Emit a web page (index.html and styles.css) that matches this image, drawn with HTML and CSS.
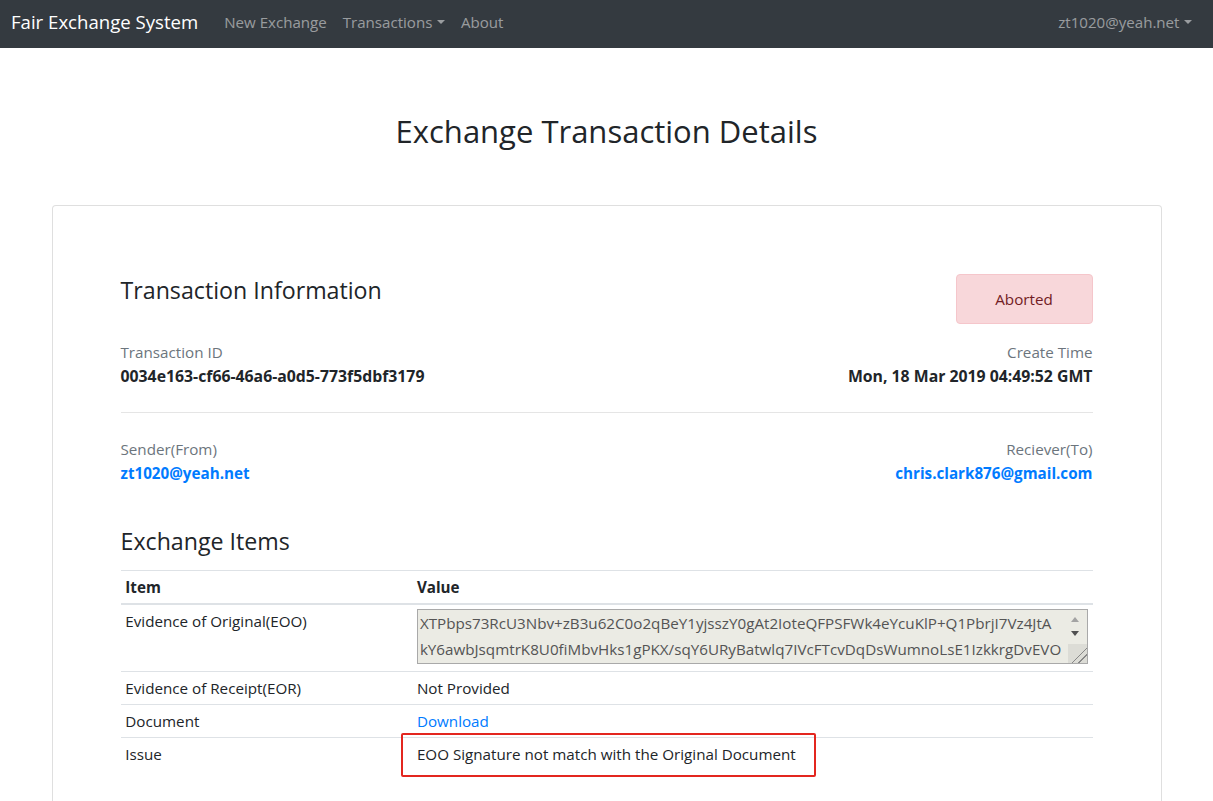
FILE: index.html
```html
<!DOCTYPE html>
<html lang="en">
<head>
<meta charset="utf-8">
<title>Fair Exchange System</title>
<link rel="stylesheet" href="styles.css">
</head>
<body>
<nav class="navbar">
  <div class="nav-left">
    <a class="brand" href="#">Fair Exchange System</a>
    <ul class="nav-links">
      <li><a class="nav-link" href="#">New Exchange</a></li>
      <li><a class="nav-link dropdown" href="#">Transactions</a></li>
      <li><a class="nav-link" href="#">About</a></li>
    </ul>
  </div>
  <a class="nav-link nav-user dropdown" href="#">zt1020@yeah.net</a>
</nav>

<main class="container">
  <h2 class="page-title">Exchange Transaction Details</h2>
  <div class="card">
    <div class="card-body">
      <div class="row-between top-row">
        <h4 class="section-title info-title">Transaction Information</h4>
        <div class="status-alert">Aborted</div>
      </div>

      <div class="row-between info-row">
        <div class="field">
          <div class="label">Transaction ID</div>
          <div class="value">0034e163-cf66-46a6-a0d5-773f5dbf3179</div>
        </div>
        <div class="field right">
          <div class="label">Create Time</div>
          <div class="value">Mon, 18 Mar 2019 04:49:52 GMT</div>
        </div>
      </div>

      <hr class="divider">

      <div class="row-between info-row">
        <div class="field">
          <div class="label">Sender(From)</div>
          <a class="value link" href="#">zt1020@yeah.net</a>
        </div>
        <div class="field right">
          <div class="label">Reciever(To)</div>
          <a class="value link" href="#">chris.clark876@gmail.com</a>
        </div>
      </div>

      <h4 class="section-title items-title">Exchange Items</h4>

      <table class="items-table">
        <thead>
          <tr><th class="col-item">Item</th><th>Value</th></tr>
        </thead>
        <tbody>
          <tr>
            <td>Evidence of Original(EOO)</td>
            <td>
              <div class="evidence-box">
                <textarea class="evidence" readonly rows="2">XTPbps73RcU3Nbv+zB3u62C0o2qBeY1yjsszY0gAt2IoteQFPSFWk4eYcuKlP+Q1PbrjI7Vz4JtA
kY6awbJsqmtrK8U0fiMbvHks1gPKX/sqY6URyBatwlq7IVcFTcvDqDsWumnoLsE1IzkkrgDvEVO
Vq3n8xTRa0PbXc2L9mWk4Ye5Gs1bN7uQjA0r+Hd6ZtC3oUf8KyIe2Wl9MpVs4Dg==</textarea>
                <span class="sb-up"></span>
                <span class="sb-down"></span>
                <span class="sb-grip"></span>
              </div>
            </td>
          </tr>
          <tr>
            <td>Evidence of Receipt(EOR)</td>
            <td>Not Provided</td>
          </tr>
          <tr>
            <td>Document</td>
            <td><a class="link-plain" href="#">Download</a></td>
          </tr>
          <tr>
            <td>Issue</td>
            <td><span class="issue-mark">EOO Signature not match with the Original Document</span></td>
          </tr>
        </tbody>
      </table>
    </div>
  </div>
</main>
</body>
</html>
```

FILE: styles.css
```css
html { overflow: hidden; }
* { box-sizing: border-box; }
body {
  margin: 0;
  font-family: "Open Sans", "Noto Sans", sans-serif;
  font-size: 15.2px;
  line-height: 24px;
  color: #212529;
  background: #fff;
}
a { text-decoration: none; }

.navbar {
  height: 48px;
  background: #343a40;
  display: flex;
  align-items: center;
  justify-content: space-between;
  padding: 0 13px 4px 11px;
}
.nav-left { display: flex; align-items: center; }
.brand {
  color: #fff;
  font-size: 18.6px;
  line-height: 30px;
  margin-right: 18px;
}
.nav-links { display: flex; list-style: none; margin: 0; padding: 0; }
.nav-link {
  color: rgba(255,255,255,.5);
  font-size: 15.1px;
  padding: 0 8px;
  line-height: 24px;
  display: block;
}
.dropdown::after {
  content: "";
  display: inline-block;
  margin-left: .3em;
  vertical-align: .255em;
  border-top: .32em solid;
  border-right: .32em solid transparent;
  border-left: .32em solid transparent;
}

.container {
  max-width: 1140px;
  margin: 0 auto;
  padding: 0 15px;
}
.page-title {
  text-align: center;
  font-size: 31px;
  font-weight: 500;
  line-height: 1.2;
  margin: 65px 0 55px;
}
.card {
  border: 1px solid rgba(0,0,0,.125);
  border-radius: 4px;
  background: #fff;
}
.card-body { padding: 68px; }

.row-between { display: flex; justify-content: space-between; align-items: flex-start; }
.section-title {
  font-size: 23.2px;
  font-weight: 500;
  line-height: 1.2;
  margin: 0;
}
.info-title { padding-top: 3px; }
.status-alert {
  background: #f8d7da;
  border: 1px solid #f5c6cb;
  color: #721c24;
  border-radius: 4px;
  width: 137px;
  height: 50px;
  display: flex;
  align-items: center;
  justify-content: center;
}
.top-row { margin-bottom: 16px; }
.field { display: flex; flex-direction: column; }
.field.right { align-items: flex-end; text-align: right; }
.label { color: #6c757d; }
.value { font-weight: 700; font-size: 15.8px; }
.link { color: #007bff; font-size: 15.2px; }
.link-plain { color: #007bff; }
.divider {
  border: 0;
  border-top: 1px solid rgba(0,0,0,.1);
  margin: 24px 0;
}
.items-title { margin: 43px 0 14px; }

.items-table {
  width: 100%;
  border-collapse: collapse;
}
.items-table th, .items-table td {
  text-align: left;
  vertical-align: top;
  padding: 4px 4.8px;
  border-top: 1px solid #dee2e6;
}
.items-table thead th {
  border-bottom: 2px solid #dee2e6;
  font-weight: 700;
}
.col-item { width: 30%; }

.evidence-box { position: relative; margin-bottom: 3px; }
.evidence {
  display: block;
  width: 100%;
  height: 55px;
  margin: 0;
  padding: 0 22px 1px 2px;
  border: 1px solid #a9a9a9;
  background: #ebebe4;
  color: #545454;
  font-family: inherit;
  font-size: 15.2px;
  line-height: 26px;
  resize: none;
  overflow: hidden;
  white-space: pre;
}
.sb-up, .sb-down {
  position: absolute;
  right: 9px;
  width: 0; height: 0;
  border-left: 4px solid transparent;
  border-right: 4px solid transparent;
}
.sb-up { top: 8px; border-bottom: 5px solid #a3a3a3; }
.sb-down { top: 22px; border-top: 5px solid #505050; }
.sb-grip {
  position: absolute;
  right: 1px; bottom: 1px;
  width: 19px; height: 19px;
  background:
    linear-gradient(135deg, transparent 58%, #888 58%, #888 63%, transparent 63%, transparent 76%, #888 76%, #888 81%, transparent 81%),
    #dcdcd6;
}

.issue-mark {
  position: relative;
  display: inline-block;
}
.issue-mark::after {
  content: "";
  position: absolute;
  left: -16px; right: -20px;
  top: -9px; bottom: -11px;
  border: 2.5px solid #e3261f;
  border-radius: 2px;
}
```
